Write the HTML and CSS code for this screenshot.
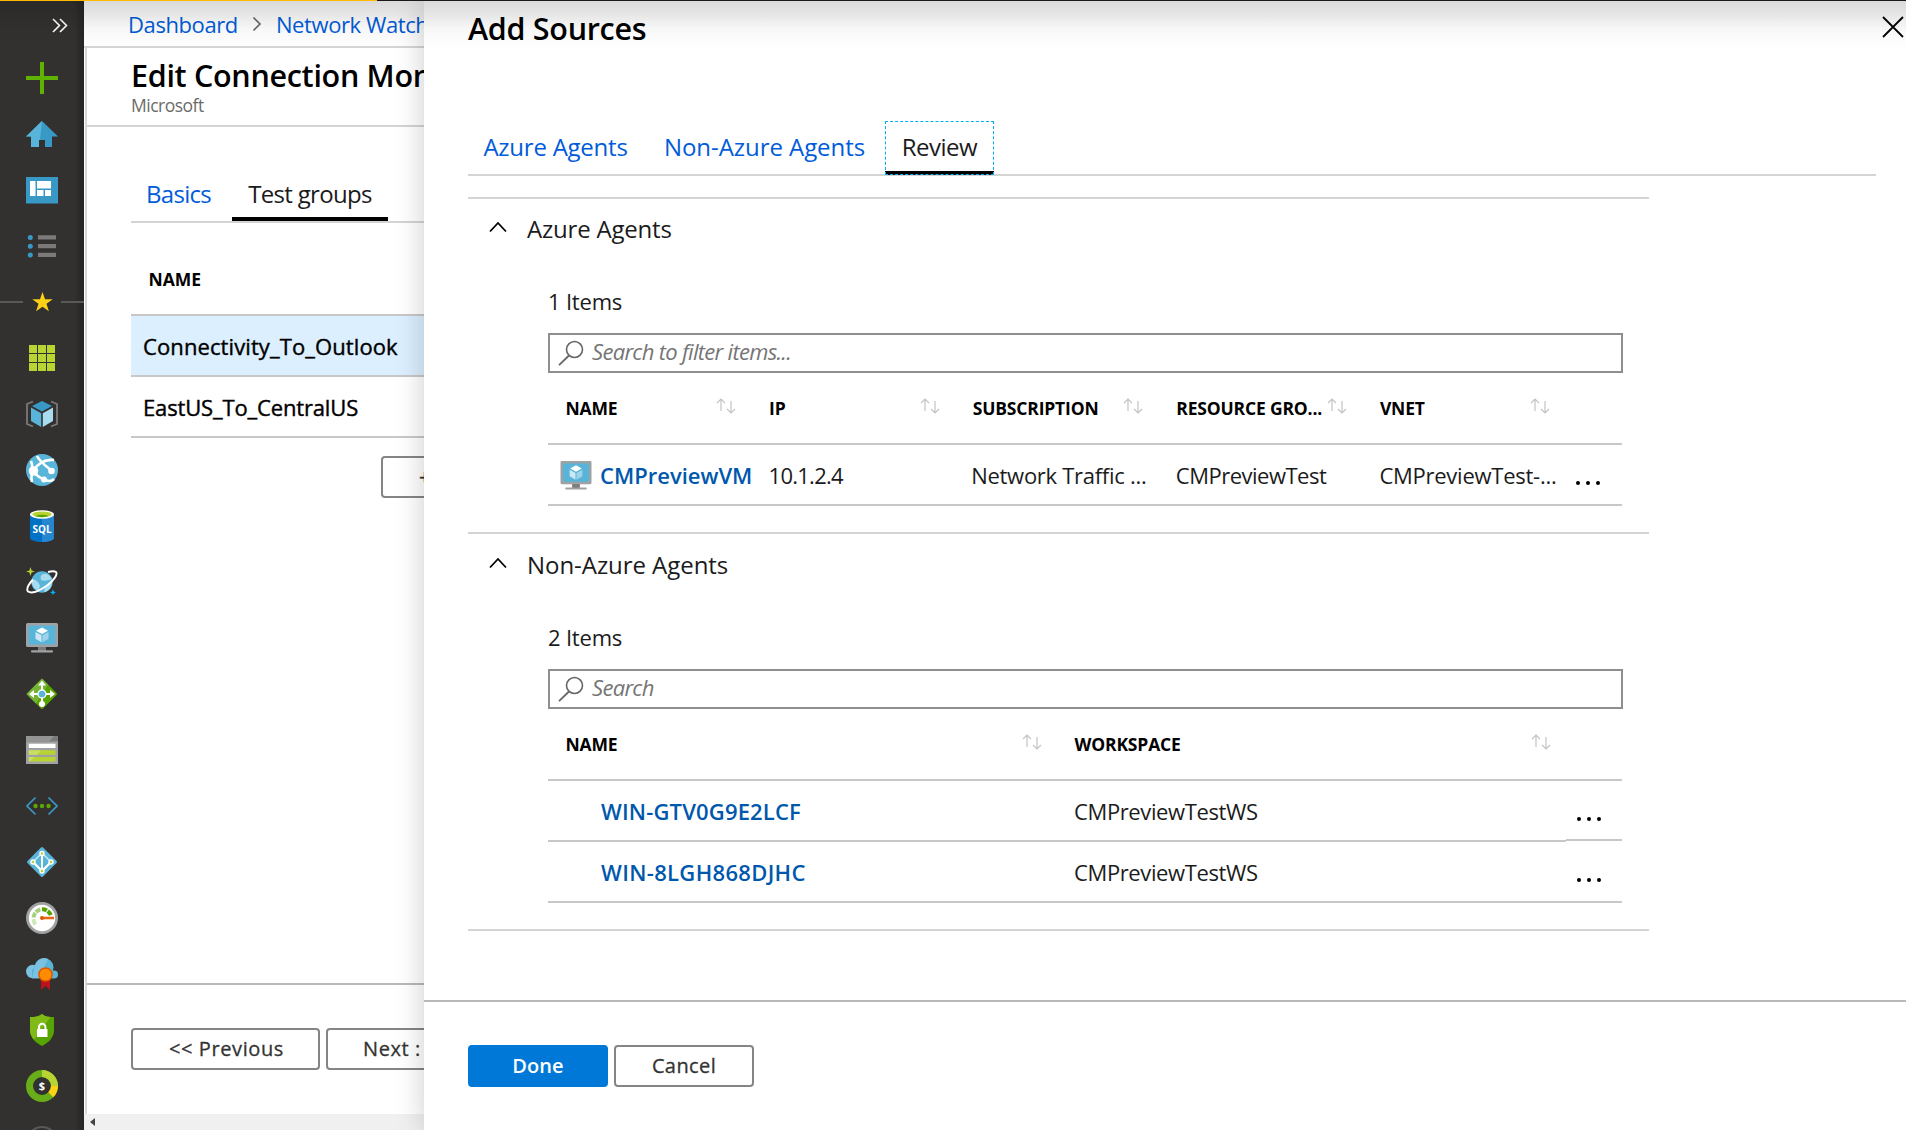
FILE: index.html
```html
<!DOCTYPE html>
<html lang="en">
<head>
<meta charset="utf-8">
<title>Add Sources</title>
<link rel="stylesheet" href="styles.css">
</head>
<body>
<svg class="defs" width="0" height="0" aria-hidden="true">
  <symbol id="vm" viewBox="0 0 32 32">
    <path d="M12 24h8v5h-8z" fill="#7a7a7a"/><rect x="5" y="28.3" width="22" height="2.2" rx=".8" fill="#a0a1a2"/>
    <rect y="1" width="32" height="24" rx="1.5" fill="#a0a1a2"/><rect x="2.5" y="3.5" width="27" height="19" fill="#59b4d9"/>
    <path d="M16 5.5l6 3.2-6 3.3-6-3.3z" fill="#fff"/><path d="M9.500 10l6 3.300v7l-6-3.500z" fill="#cde8f4"/><path d="M22.500 10l-6 3.300v7l6-3.500z" fill="#9fd3ea"/>
  </symbol>
  <symbol id="sort" viewBox="0 0 20 16">
    <path d="M5 13V1M1 5l4-4 4 4M15 3v12M11 11l4 4 4-4" fill="none" stroke="#c4c4c4" stroke-width="1.200"/>
  </symbol>
  <symbol id="glass" viewBox="0 0 26 26">
    <circle cx="16.500" cy="9.500" r="8" fill="none" stroke="#666" stroke-width="1.600"/><path d="M11 15.500L1 25.200" stroke="#666" stroke-width="1.800"/>
  </symbol>
  <symbol id="up" viewBox="0 0 18 12"><path d="M1 10.500l8-8.500 8 8.500" fill="none" stroke="#000" stroke-width="1.800"/></symbol>
  <symbol id="dots" viewBox="0 0 26 6"><circle cx="3" cy="3" r="2"/><circle cx="13" cy="3" r="2"/><circle cx="23" cy="3" r="2"/></symbol>
</svg>

<div class="portal">
  <nav class="rail">
    <div class="rail-toggle"><svg width="16" height="15" viewBox="0 0 16 15"><path d="M1 1l6.500 6.500L1 14M8 1l6.500 6.500L8 14" fill="none" stroke="#fff" stroke-width="1.600"/></svg></div>
    <div class="rail-item"><svg viewBox="0 0 32 32"><path d="M16 0v32M0 16h32" stroke="#5db300" stroke-width="4"/></svg></div>
    <div class="rail-item"><svg viewBox="0 0 32 32"><path d="M16 3L0 18.500h5V29h8v-7h6v7h7V18.500h6z" fill="#3999c6"/><path d="M16 3L0 18.500h5V29h8v-7h1z" fill="#59b4d9"/></svg></div>
    <div class="rail-item"><svg viewBox="0 0 32 32"><path d="M0 3h32v26.500H0z" fill="#3999c6"/><path d="M4 7h5.500v15H4zM11 7h14v7.500H11zM11 16h6.500v6H11zM19 16h6v6h-6z" fill="#fff"/></svg></div>
    <div class="rail-item"><svg viewBox="0 0 32 32"><g fill="#3999c6"><circle cx="4.300" cy="7.500" r="2.500"/><circle cx="4.300" cy="16.300" r="2.500"/><circle cx="4.300" cy="25" r="2.500"/></g><path d="M12 5.200h18v4.300H12zM12 14h18v4.300H12zM12 22.800h18v4.300H12z" fill="#7a7a7a"/></svg></div>
    <div class="rail-item rail-fav"><svg viewBox="0 0 32 32"><path d="M16.500 6l2.500 7.300h7.700l-6.200 4.500 2.400 7.400-6.400-4.500-6.400 4.500 2.400-7.400-6.200-4.500H14z" fill="#fcd116"/></svg></div>
    <div class="rail-item"><svg viewBox="0 0 32 32"><path d="M3 3h8v8H3zM12 3h8v8h-8zM21 3h8v8h-8zM3 12h8v8H3zM12 12h8v8h-8zM21 12h8v8h-8zM3 21h8v8H3zM12 21h8v8h-8zM21 21h8v8h-8z" fill="#b8d432"/></svg></div>
    <div class="rail-item"><svg viewBox="0 0 32 32"><path d="M7 3.500L1 6v20l6 2.500M25 3.500L31 6v20l-6 2.500" fill="none" stroke="#7a7a7a" stroke-width="1.800"/><path d="M16 3l10 5-10 5.500L6 8z" fill="#3999c6"/><path d="M5 9.500l10.200 5.800V29L5 23z" fill="#59b4d9"/><path d="M27 9.500l-10.200 5.800V29L27 23z" fill="#a9dcef"/></svg></div>
    <div class="rail-item"><svg viewBox="0 0 32 32"><circle cx="16" cy="16" r="16" fill="#59b4d9"/><path d="M7 17C12 9 19 5 28 6M11 2C14 8 20 12 26 17M7 17c3 4 7 7 12 9s7 1 9-1M7 17c-2 3-2 6-1 11M7 17c-1-5-1-8-2-10" fill="none" stroke="#fff" stroke-width="2.600"/><circle cx="7.500" cy="17" r="4.800" fill="#fff"/><circle cx="25.500" cy="17" r="3.300" fill="#fff"/><circle cx="18" cy="25.500" r="3" fill="#fff"/></svg></div>
    <div class="rail-item"><svg viewBox="0 0 32 32"><path d="M4 4v24c0 2.200 5.400 4 12 4s12-1.800 12-4V4z" fill="#0072c6"/><path d="M16 4v28c6.600 0 12-1.800 12-4V4z" fill="#2686cf"/><ellipse cx="16" cy="4.500" rx="12" ry="4.200" fill="#fff"/><ellipse cx="16" cy="4.300" rx="9.800" ry="2.900" fill="#b8d432"/><path d="M9 6c4-1.600 10-1.600 14 0-4 1.500-10 1.500-14 0z" fill="#5aa300"/><text class="sql" x="16" y="22.500" text-anchor="middle">SQL</text></svg></div>
    <div class="rail-item"><svg viewBox="0 0 32 32"><circle cx="16" cy="16" r="10.700" fill="#59b4d9"/><path d="M14.500 11c1-3 5-4 7.500-2.500l4 4c-2 2-8 3-11 1.500zM6 14c3-1 7 2 8 6l-1.500 4.500C8 23 5 19 6 14zM19 21l7-5c0 5-4 10-8 10z" fill="#a9dcef"/><path d="M7 13.500C2 19 0 23 2 25.500c4 2.500 12-1 19-6S32 8 30 6c-1.500-1-4-1-8 0" fill="none" stroke="#fff" stroke-width="1.900"/><path d="M4.500 1l1.100 3.400L9 5.500 5.600 6.600 4.500 10 3.400 6.600 0 5.500l3.400-1.100z" fill="#b8d432"/><path d="M27 23.500l.9 2 2 .9-2 .9-.9 2-.9-2-2-.9 2-.9z" fill="#00b4ff"/></svg></div>
    <div class="rail-item"><svg><use href="#vm"/></svg></div>
    <div class="rail-item"><svg viewBox="0 0 32 32"><rect x="5" y="5" width="22" height="22" rx="1.500" transform="rotate(45 16 16)" fill="#57a300"/><path d="M16 .4L.4 16l9.600 9.500L22 6.400z" fill="#75b335"/><path d="M16 26V5M5 16h22" stroke="#fff" stroke-width="2"/><path d="M16 2.500l4 5h-8zM3 16l5-4v8zM29 16l-5-4v8z" fill="#fff"/><circle cx="16" cy="26" r="3" fill="#fff"/><circle cx="16" cy="16" r="4" fill="#59b4d9" stroke="#fff" stroke-width="1.300"/></svg></div>
    <div class="rail-item"><svg viewBox="0 0 32 32"><path d="M0 2h32v28H0z" fill="#a0a1a2"/><path d="M0 2h32v5.500H0z" fill="#7a7a7a"/><path d="M0 2h28l-5 5.500H0z" fill="#949494"/><path d="M2.800 9.700h26.700V14H2.800z" fill="#fff"/><path d="M2.800 16.300h26.700v4.500H2.800zM2.800 23h26.700v4.500H2.800z" fill="#b8d432"/><path d="M2.800 16.300H15l-4 4.500H2.800zM2.800 23h6l-5 4.500h-1z" fill="#c9de65"/></svg></div>
    <div class="rail-item"><svg viewBox="0 0 32 32"><path d="M9.500 7.500L1 16l8.500 8.500M22.500 7.500L31 16l-8.500 8.500" fill="none" stroke="#3999c6" stroke-width="1.700"/><g fill="#5aa800"><circle cx="9.500" cy="16" r="2.200"/><circle cx="16" cy="16" r="2.200"/><circle cx="22.500" cy="16" r="2.200"/></g></svg></div>
    <div class="rail-item"><svg viewBox="0 0 32 32"><rect x="5" y="5" width="22" height="22" rx="1.500" transform="rotate(45 16 16)" fill="#59b4d9"/><path d="M16 7L7 16l9 9 9-9z" fill="none" stroke="#c5e5f2" stroke-width="1.500"/><path d="M7 16l9 9 9-9M16 7v18" fill="none" stroke="#fff" stroke-width="2"/><g fill="#b8d432" stroke="#fff" stroke-width="1.400"><circle cx="16" cy="7.500" r="2"/><circle cx="7" cy="16" r="2"/><circle cx="25" cy="16" r="2"/><circle cx="16" cy="25" r="2"/></g></svg></div>
    <div class="rail-item"><svg viewBox="0 0 32 32"><circle cx="16" cy="16" r="14.600" fill="#fff" stroke="#a0a1a2" stroke-width="2.800"/><path d="M9.500 22.500A9 9 0 0 1 7.500 17" fill="none" stroke="#d0e8bd" stroke-width="4"/><path d="M7.500 15.500a9 9 0 0 1 7-8" fill="none" stroke="#a5d080" stroke-width="4" stroke-dasharray="5 1"/><path d="M16 7.300a9 9 0 0 1 9 6.500" fill="none" stroke="#57a300" stroke-width="4" stroke-dasharray="5 1"/><path d="M15.500 16H28" stroke="#e8681a" stroke-width="2.600"/><circle cx="16" cy="16" r="2" fill="#dd5900"/></svg></div>
    <div class="rail-item"><svg viewBox="0 0 32 32"><circle cx="6.700" cy="13.500" r="6.700" fill="#7ac2e0"/><circle cx="18" cy="9.500" r="9.500" fill="#59b4d9"/><circle cx="28" cy="16.500" r="4" fill="#59b4d9"/><path d="M6 11h21v9.300H6z" fill="#59b4d9"/><path d="M9 8.500C11 1 17-1 22 1L13 20.200H6z" fill="#7ac2e0"/><path d="M15 22h9v10l-4.500-4-4.500 4z" fill="#ba141a"/><circle cx="19.500" cy="16.500" r="6.600" fill="#ff8c00" stroke="#dd5900" stroke-width="1.500"/></svg></div>
    <div class="rail-item"><svg viewBox="0 0 32 32"><path d="M16 0c3 2.500 7 3 12 3v13c0 8-6 13-12 16C10 29 4 24 4 16V3c5 0 9-.5 12-3z" fill="#57a300"/><path d="M16 0c3 2.500 4 2.500 8.500 3L8 25.500C5.500 23 4 20 4 16V3c5 0 9-.5 12-3z" fill="#7fba16"/><path d="M11 15h10.500v8H11z" fill="#fff"/><path d="M13 15.500V13a3.200 3.200 0 0 1 6.400 0v2.500" fill="none" stroke="#fff" stroke-width="2"/></svg></div>
    <div class="rail-item"><svg viewBox="0 0 32 32"><circle cx="16" cy="16" r="12.500" fill="none" stroke="#67ae18" stroke-width="7"/><path d="M16 3.500A12.500 12.500 0 0 1 28.500 16" fill="none" stroke="#b8d432" stroke-width="7"/><path d="M28.500 16a12.500 12.500 0 0 1-3.700 8.800" fill="none" stroke="#fcd116" stroke-width="7"/><text class="dollar" x="16" y="20" text-anchor="middle">$</text></svg></div>
    <div class="rail-item"><svg viewBox="0 0 32 32"><circle cx="16" cy="16" r="15" fill="none" stroke="#5a5958" stroke-width="1.800"/></svg></div>
  </nav>

  <main class="page">
    <div class="crumbs"><a>Dashboard</a><svg width="10" height="16" viewBox="0 0 10 16"><path d="M1.500 1.500L8 8l-6.500 6.500" fill="none" stroke="#666" stroke-width="1.600"/></svg><a>Network Watcher</a></div>
    <section class="monitor">
      <header class="monitor-head"><h1>Edit Connection Monitor</h1><p>Microsoft</p></header>
      <div class="monitor-body">
        <div class="tabs tabs-groups"><a class="tab">Basics</a><a class="tab is-active">Test groups</a></div>
        <div class="groups">
          <div class="groups-head">NAME</div>
          <div class="group is-selected">Connectivity_To_Outlook</div>
          <div class="group group-tight">EastUS_To_CentralUS</div>
        </div>
        <button class="btn btn-add">+ Add Test group</button>
      </div>
      <footer class="monitor-foot"><button class="btn btn-prev">&lt;&lt; Previous</button><button class="btn btn-next">Next : Review</button></footer>
    </section>
    <div class="scrollbar"><svg width="5" height="8" viewBox="0 0 5 8"><path d="M5 0v8L0 4z" fill="#444"/></svg></div>
  </main>

  <aside class="blade">
    <header class="blade-head"><h2>Add Sources</h2><svg width="22" height="22" viewBox="0 0 22 22"><path d="M1 1l20 20M21 1L1 21" stroke="#000" stroke-width="1.800"/></svg></header>
    <div class="tabs tabs-blade"><a class="tab">Azure Agents</a><a class="tab tab-wide">Non-Azure Agents</a><a class="tab is-active is-focused">Review</a></div>
    <div class="blade-body">
      <section class="agents">
        <h3><svg width="18" height="12"><use href="#up"/></svg>Azure Agents</h3>
        <p class="count">1 Items</p>
        <div class="search"><svg width="26" height="26"><use href="#glass"/></svg><span>Search to filter items...</span></div>
        <div class="grid grid-five grid-head">
          <div><b>NAME</b><svg><use href="#sort"/></svg></div>
          <div><b>IP</b><svg><use href="#sort"/></svg></div>
          <div><b>SUBSCRIPTION</b><svg><use href="#sort"/></svg></div>
          <div><b>RESOURCE GRO...</b><svg><use href="#sort"/></svg></div>
          <div><b>VNET</b><svg><use href="#sort"/></svg></div>
        </div>
        <div class="grid grid-five grid-row">
          <div class="name"><svg class="vm"><use href="#vm"/></svg>CMPreviewVM</div>
          <div class="ip">10.1.2.4</div>
          <div>Network Traffic ...</div>
          <div class="group-name">CMPreviewTest</div>
          <div>CMPreviewTest-...</div>
          <div class="more"><svg><use href="#dots"/></svg></div>
        </div>
      </section>
      <section class="agents">
        <h3><svg width="18" height="12"><use href="#up"/></svg>Non-Azure Agents</h3>
        <p class="count">2 Items</p>
        <div class="search"><svg width="26" height="26"><use href="#glass"/></svg><span>Search</span></div>
        <div class="grid grid-two grid-head">
          <div><b>NAME</b><svg><use href="#sort"/></svg></div>
          <div><b>WORKSPACE</b><svg><use href="#sort"/></svg></div>
        </div>
        <div class="grid grid-two grid-row is-stepped">
          <div class="name machine">WIN-GTV0G9E2LCF</div>
          <div>CMPreviewTestWS</div>
          <div class="more"><svg><use href="#dots"/></svg></div>
        </div>
        <div class="grid grid-two grid-row">
          <div class="name machine machine-wide">WIN-8LGH868DJHC</div>
          <div>CMPreviewTestWS</div>
          <div class="more"><svg><use href="#dots"/></svg></div>
        </div>
      </section>
    </div>
    <footer class="blade-foot"><button class="btn btn-primary">Done</button><button class="btn btn-cancel">Cancel</button></footer>
  </aside>
  <div class="top-shade"></div>
  <div class="progress"></div>
</div>
</body>
</html>
```
FILE: styles.css
```css
* { box-sizing: border-box; }
html, body { margin: 0; height: 100%; overflow: hidden; }
body { font: 22px "Open Sans", "Noto Sans", sans-serif; color: #1b1b1b; background: #fff; }
h1, h2, h3, p { margin: 0; font-weight: 400; }
svg { display: block; flex: none; }
a { color: #015cda; }
.defs { position: absolute; }
.portal { position: relative; display: flex; width: 1906px; height: 1130px; overflow: hidden; }

/* left rail */
.rail { flex: none; width: 84px; height: 1130px; overflow: hidden; background: linear-gradient(90deg, #33312f 74px, #262524 84px); }
.rail-toggle { height: 50px; padding: 18px 0 0 52px; }
.rail-item { height: 56px; display: flex; align-items: center; justify-content: center; }
.rail-item svg { width: 32px; height: 32px; }
.rail-fav { gap: 3px; }
.rail-fav::before, .rail-fav::after { content: ""; flex: 1; height: 2px; background: #5a5958; }
.sql { font: 700 10px "Open Sans", sans-serif; fill: #fff; }
.dollar { font: 700 11px "Open Sans", sans-serif; fill: #fff; }

/* page under the blade */
.page { width: 400px; flex: auto; display: flex; flex-direction: column; }
.crumbs { flex: none; height: 48px; border-bottom: 2px solid #d4d4d4; display: flex; align-items: center; gap: 14px; padding: 1px 0 0 44px; letter-spacing: -.4px; white-space: nowrap; }
.crumbs a { line-height: 30px; }
.monitor { flex: 1; min-height: 0; margin-left: 1px; border-left: 2px solid #d6d6d6; display: flex; flex-direction: column; }
.monitor-head { flex: none; height: 79px; border-bottom: 2px solid #d4d4d4; padding: 7px 0 0 44px; white-space: nowrap; }
.monitor-head h1 { font-size: 30.5px; font-weight: 600; line-height: 40px; letter-spacing: -.3px; color: #000; }
.monitor-head p { font-size: 17.5px; line-height: 20px; letter-spacing: -.5px; color: #6b6b6b; }
.monitor-body { flex: 1; padding: 45px 0 0 44px; }
.monitor-foot { height: 131px; border-top: 2px solid #b9b9b9; padding: 43px 0 0 44px; display: flex; gap: 6px; }
.scrollbar { height: 16px; background: #f0f0f0; padding: 4px 0 0 6px; }

.tabs { display: flex; border-bottom: 2px solid #d4d4d4; font-size: 24px; }
.tab { display: flex; justify-content: center; line-height: 34px; }
.tab.is-active { color: #1b1b1b; border-bottom: 4px solid #000; }
.tabs-groups { height: 51px; letter-spacing: -.72px; }
.tabs-groups .tab { width: 101px; height: 49px; padding: 5px 6px 0 0; }
.tabs-groups .tab.is-active { width: 156px; padding-right: 0; letter-spacing: -.68px; }

.groups-head { height: 93px; padding: 44px 0 0 17.500px; font-size: 17.5px; font-weight: 700; line-height: 24px; color: #000; border-bottom: 2px solid #c8c8c8; }
.group { height: 61px; padding: 16px 0 0 12px; line-height: 28px; color: #000; border-bottom: 2px solid #c8c8c8; -webkit-text-stroke: .4px #000; letter-spacing: .1px; }
.group-tight { letter-spacing: -.15px; }
.group.is-selected { background: #dceffe; }

.btn { flex: none; height: 42px; padding: 0 0 2px; border: 2px solid #858585; border-radius: 4px; background: #fff; color: #333; font: 20px "Open Sans", "Noto Sans", sans-serif; letter-spacing: .4px; -webkit-text-stroke: .3px #333; }
.btn-add { margin: 18px 0 0 250px; width: 250px; text-align: left; padding-left: 36px; }
.btn-prev { width: 189px; padding-left: 2px; letter-spacing: .6px; }
.btn-next { width: 189px; text-align: left; padding-left: 35px; letter-spacing: .6px; }

/* blade */
.blade { position: absolute; left: 424px; top: 0; width: 1482px; height: 1130px; background: #fff; box-shadow: 0 0 28px rgba(0,0,0,.2); display: flex; flex-direction: column; }
.blade-head { height: 121px; padding: 9px 2px 0 44px; display: flex; justify-content: space-between; }
.blade-head h2 { font-size: 30.5px; font-weight: 600; line-height: 38px; letter-spacing: -.3px; color: #000; }
.blade-head svg { margin-top: 7px; }
.tabs-blade { flex: none; height: 55px; margin: 0 30px 0 44px; letter-spacing: -.24px; }
.tabs-blade .tab { width: 176px; height: 54px; padding: 9px 1px 0 0; }
.tabs-blade .tab-wide { width: 241px; padding-right: 0; letter-spacing: -.05px; }
.tabs-blade .tab.is-focused { width: 109px; padding-right: 0; letter-spacing: -.5px; outline: 1px dashed #00b0ef; outline-offset: -1px; }
.blade-body { flex: 1; margin: 21px 257px 0 44px; border-top: 2px solid #d4d4d4; }
.agents { padding: 12px 27px 26px 80px; border-bottom: 2px solid #d4d4d4; }
.agents + .agents { padding-top: 13px; }
.agents h3 { display: flex; align-items: center; gap: 20px; margin-left: -59px; font-size: 24px; line-height: 36px; letter-spacing: -.2px; }
.agents + .agents h3 { letter-spacing: -.05px; }
.agents h3 svg { margin-bottom: 4px; }
.count { margin-top: 39px; line-height: 30px; letter-spacing: -.2px; }
.search { height: 40px; margin: 17px 0 0; width: 1075px; border: 2px solid #8f8f8f; padding-left: 8px; display: flex; align-items: center; gap: 8px; font-style: italic; letter-spacing: -.7px; color: #757575; }
.search svg { margin-bottom: 1px; }
.search span { padding-bottom: 4px; }
.grid { display: grid; width: 1074px; border-bottom: 2px solid #c8c8c8; }
.grid-five { grid-template-columns: 203.600px 203.600px 203.600px 203.600px 203.600px 56px; }
.grid-two { grid-template-columns: 509px 509px 56px; }
.grid-head { height: 72px; }
.grid-head > div { display: flex; justify-content: space-between; align-items: flex-start; padding: 23px 15.500px 0 17.500px; }
.grid-head b { font-size: 17.5px; line-height: 25px; letter-spacing: -.17px; color: #000; white-space: nowrap; }
.grid-head svg { width: 20px; height: 16px; margin-top: 2px; }
.grid-row { height: 61px; line-height: 28px; letter-spacing: -.38px; white-space: nowrap; }
.grid-row > div { padding: 16px 0 0 17px; }
.grid-five.grid-row > div:nth-child(3) { padding-left: 16px; letter-spacing: -.28px; }
.grid-five.grid-row > div:nth-child(5) { letter-spacing: -.25px; }
.grid-row .group-name { letter-spacing: -.5px; }
.grid-row .ip { letter-spacing: -.75px; }
.grid-row .name { display: flex; gap: 8px; padding-left: 12px; font-weight: 600; letter-spacing: 0; color: #0058ad; }
.grid-row .machine { padding-left: 53px; letter-spacing: .16px; }
.grid-row .machine-wide { letter-spacing: .33px; }
.vm { width: 32px; height: 31px; margin-top: -1px; }
.grid-row .more { padding: 35px 0 0 9.500px; }
.more svg { width: 26px; height: 6px; }
/* the menu cell sits one pixel shorter than the rest of its row */
.is-stepped { border-bottom: 0; }
.is-stepped > div { height: 61px; border-bottom: 2px solid #c8c8c8; }
.is-stepped > .more { height: 60px; }
.blade-foot { height: 130px; border-top: 2px solid #b9b9b9; padding: 43px 0 0 44px; display: flex; gap: 6px; }
.btn-primary { width: 140px; border-color: #0078d7; background: #0078d7; color: #fff; font-weight: 600; letter-spacing: .1px; -webkit-text-stroke: 0; }
.btn-cancel { width: 140px; }

/* shade and loading line over the top edge */
.top-shade { position: absolute; left: 0; top: 0; width: 1906px; height: 48px; background: linear-gradient(rgba(0,0,0,.15), rgba(0,0,0,.11) 25%, rgba(0,0,0,.03) 60%, rgba(0,0,0,0)); }
.progress { position: absolute; left: 0; top: 0; width: 1906px; height: 1px; background: linear-gradient(90deg, #ffb900 377px, #1b161b 377px); }
```
